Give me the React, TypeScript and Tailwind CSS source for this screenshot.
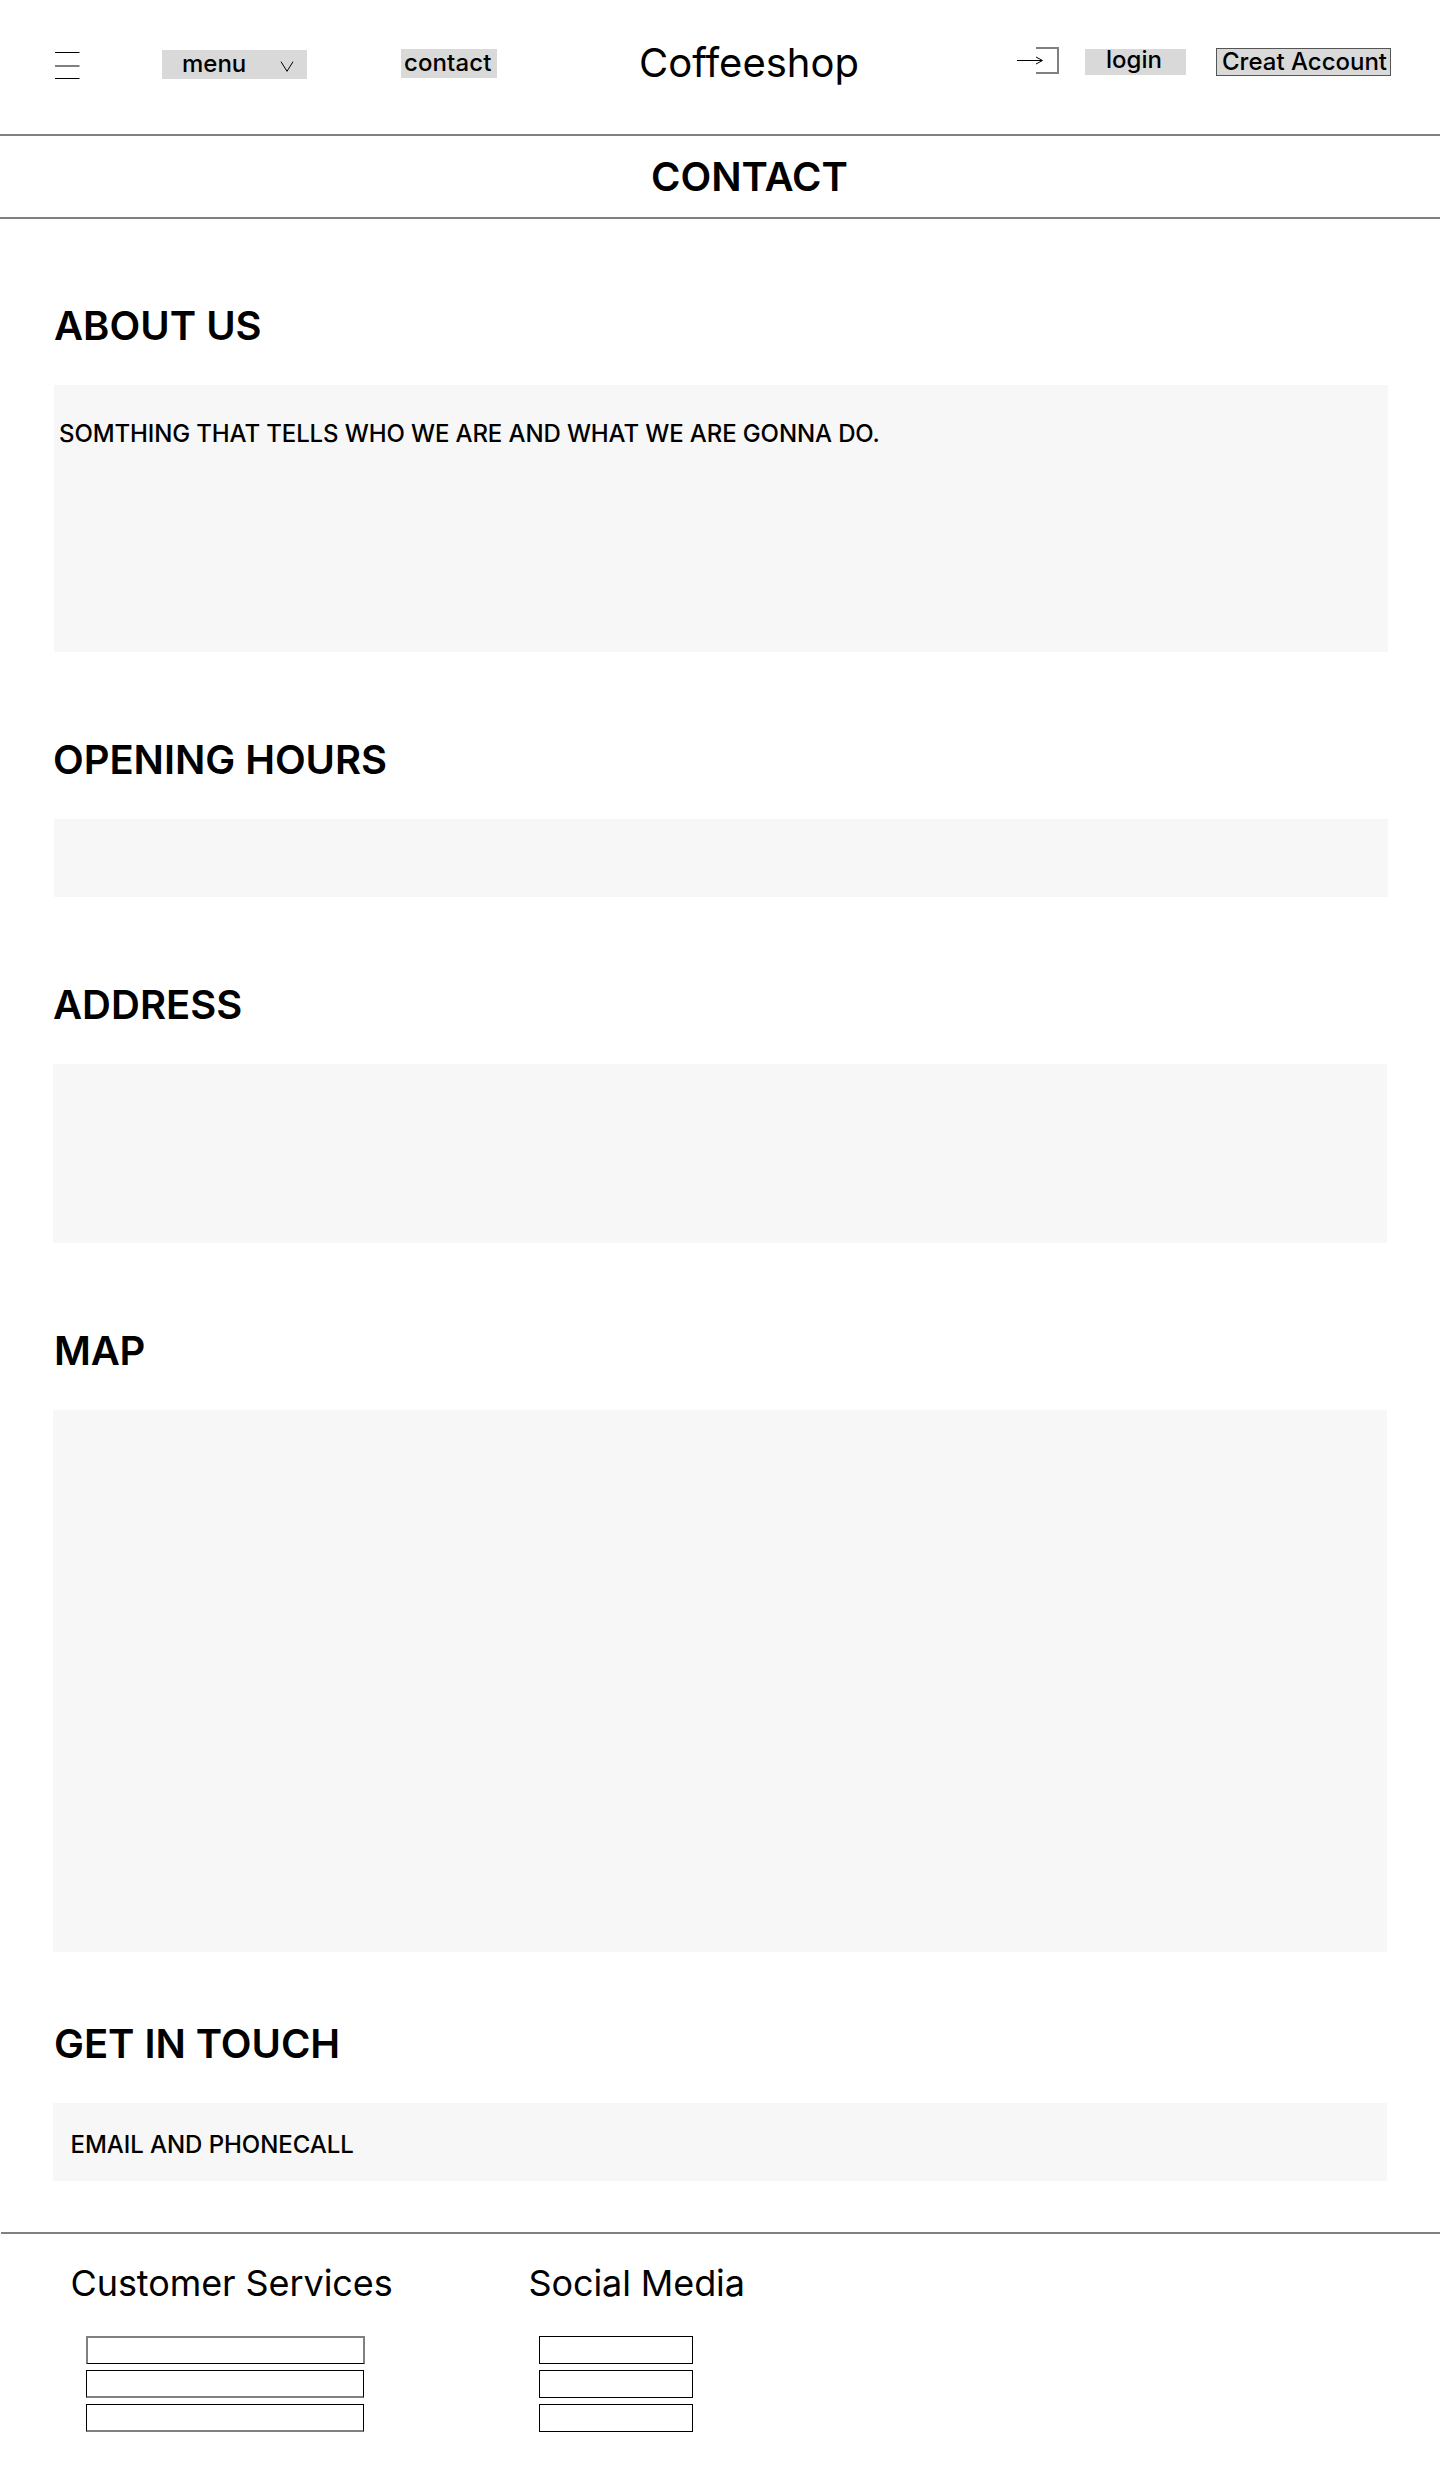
import type { ReactNode } from "react";

type SectionProps = { title: string; className: string; titleClass?: string; children?: ReactNode };

function Section({ title, className, titleClass = "", children }: SectionProps) {
  return (
    <section className={className}>
      <h2 className={`h-12 whitespace-nowrap text-[40px] leading-[48px] font-semibold ${titleClass}`}>{title}</h2>
      {children}
    </section>
  );
}

export default function App() {
  return (
    <div className="h-[2470px] w-[1440px] overflow-hidden bg-white font-['Inter',sans-serif] text-black">
      <header className="flex h-[136px] items-start border-b-2 border-[#808080]">
        <svg className="mt-[52px] ml-[55px] h-[27px] w-[25px] shrink-0" viewBox="0 0 25 27">
          <path d="M0 .5H24.5M0 26.5H24.5" stroke="#000" />
          <path d="M0 14H24.5" stroke="#808080" strokeWidth="2" />
        </svg>
        <button className="mt-[50px] ml-[82px] flex h-[29px] w-[145px] shrink-0 items-start justify-between bg-[#d9d9d9] pr-[13px] pl-[20px] text-2xl leading-[27px] font-medium">
          <span>menu</span>
          <svg className="mt-[11px] h-[12px] w-[14px]" viewBox="0 0 14 12" fill="none" stroke="#000">
            <path d="M1 .7L7 10.3L13 .7" />
          </svg>
        </button>
        <button className="mt-[49px] ml-[94px] h-[29px] w-[96px] shrink-0 bg-[#d9d9d9] pb-[2px] pl-[3px] text-left text-2xl leading-[27px] font-medium tracking-[0.1px]">contact</button>
        <div className="mt-[39px] ml-[142px] w-[230px] shrink-0 text-[40px] leading-[48px]">Coffeeshop</div>
        <svg className="mt-[46px] ml-[148px] h-[29px] w-[43px] shrink-0" viewBox="0 0 43 29" fill="none" stroke="#000">
          <path d="M0 14.5H25M19 11L25.500 14.5L19 18" />
          <path d="M19 2H41V27H19" stroke="#808080" strokeWidth="2" />
        </svg>
        <button className="mt-[49px] ml-[25px] h-[26px] w-[101px] shrink-0 bg-[#d9d9d9] pb-[5px] pl-[21px] text-left text-2xl leading-[21px] font-medium">login</button>
        <button className="mt-[48px] ml-[30px] h-[28px] w-[175px] shrink-0 border border-[#555] bg-[#d9d9d9] pl-[5px] text-left text-2xl leading-[24px] font-medium whitespace-nowrap">
          Creat Account
        </button>
      </header>

      <h1 className="h-[83px] border-b-2 border-[#808080] pt-[17px] pl-[651px] text-[40px] leading-[48px] font-semibold">CONTACT</h1>

      <main className="pl-[53px]">
        <Section title="ABOUT US" className="pt-[83px] pl-px">
          <div className="mt-[35px] h-[267px] w-[1334px] bg-[#f7f7f7] pt-[34px] pl-[5px] text-2xl leading-[29px] font-medium tracking-[-0.12px]">
            SOMTHING THAT TELLS WHO WE ARE AND WHAT WE ARE GONNA DO.
          </div>
        </Section>
        <Section title="OPENING HOURS" className="pt-[84px] pl-px" titleClass="-ml-px tracking-[-0.06px]">
          <div className="mt-[35px] h-[78px] w-[1334px] bg-[#f7f7f7]" />
        </Section>
        <Section title="ADDRESS" className="pt-[84px]">
          <div className="mt-[35px] h-[179px] w-[1334px] bg-[#f7f7f7]" />
        </Section>
        <Section title="MAP" className="pt-[84px]" titleClass="pl-px tracking-[-0.2px]">
          <div className="mt-[35px] h-[542px] w-[1334px] bg-[#f7f7f7]" />
        </Section>
        <Section title="GET IN TOUCH" className="pt-[68px]" titleClass="pl-px tracking-[-0.06px]">
          <div className="mt-[35px] h-[78px] w-[1334px] bg-[#f7f7f7] pt-[27px] pl-[17.5px] text-2xl leading-[29px] font-medium tracking-[-0.06px]">
            EMAIL AND PHONECALL
          </div>
        </Section>
      </main>

      <footer className="mt-[51px] ml-px flex border-t-2 border-[#808080] pt-[27px]">
        <div className="ml-[69px] w-[458px]">
          <h3 className="pl-[0.5px] text-4xl leading-[44px] tracking-[-0.08px]">Customer Services</h3>
          <div className="mt-[31px] ml-[16px] flex flex-col gap-[6px]">
            <div className="h-[28px] w-[279px] border-2 border-b border-[#808080] border-b-black" />
            <div className="h-[28px] w-[278px] border border-b-2 border-black border-b-[#808080]" />
            <div className="h-[28px] w-[278px] border border-b-2 border-black border-b-[#808080]" />
          </div>
        </div>
        <div>
          <h3 className="pl-[0.5px] text-4xl leading-[44px] tracking-[-0.1px]">Social Media</h3>
          <div className="mt-[31px] ml-[11px] flex flex-col gap-[6px]">
            <div className="h-[28px] w-[154px] border border-black" />
            <div className="h-[28px] w-[154px] border border-black" />
            <div className="h-[28px] w-[154px] border border-black" />
          </div>
        </div>
      </footer>
    </div>
  );
}
